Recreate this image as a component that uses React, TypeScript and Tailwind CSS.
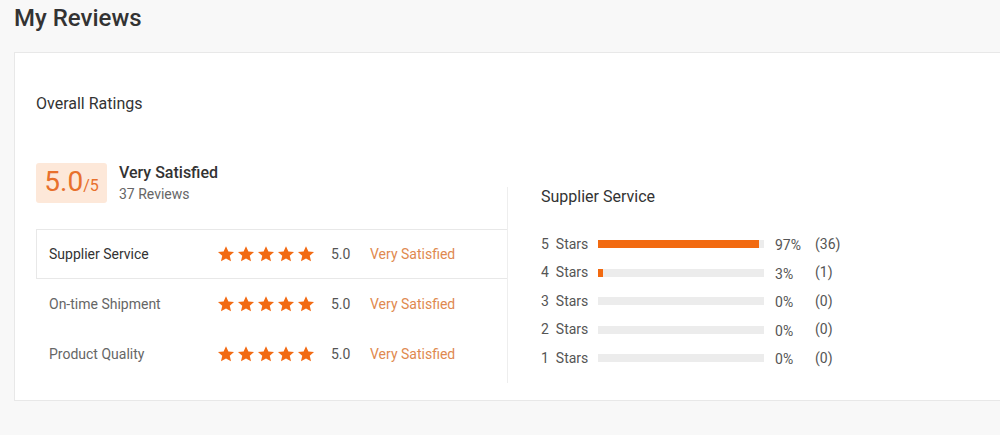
const categories = [
  { label: 'Supplier Service', score: '5.0', active: true },
  { label: 'On-time Shipment', score: '5.0', active: false },
  { label: 'Product Quality', score: '5.0', active: false },
]

const breakdown = [
  { stars: 5, pct: 97, count: 36 },
  { stars: 4, pct: 3, count: 1 },
  { stars: 3, pct: 0, count: 0 },
  { stars: 2, pct: 0, count: 0 },
  { stars: 1, pct: 0, count: 0 },
]

function Star() {
  return (
    <svg width="18" height="18" viewBox="0 0 24 24" className="shrink-0">
      <path
        d="M12 1.5l3.2 7 7.5.7-5.7 5.1 1.7 7.5L12 17.9l-6.7 3.9 1.7-7.5-5.7-5.1 7.5-.7z"
        fill="#f26a13"
      />
    </svg>
  )
}

export default function App() {
  return (
    <div className="h-[435px] w-[1000px] overflow-hidden bg-[#f8f8f8] font-['Roboto',sans-serif] text-[#333]">
      {/* Title */}
      <div className="h-[52px] pl-[14px] pt-[3px]">
        <h1 className="text-[24px] leading-[30px] font-medium text-[#333]">My Reviews</h1>
      </div>

      {/* Card */}
      <div className="ml-[14px] h-[349px] w-[1000px] border border-[#e8e8e8] bg-white pl-[21px]">
        <h2 className="pt-[41px] text-[16px] leading-[20px] text-[#333]">Overall Ratings</h2>

        <div className="mt-[49px] flex items-start">
          {/* Left column */}
          <div className="w-[471px]">
            <div className="flex items-start gap-3">
              <div className="flex h-[40px] w-[71px] items-baseline justify-center rounded-[3px] bg-[#fde8d9] pt-[3px]">
                <span className="text-[28px] leading-[32px] text-[#e8702c]">5.0</span>
                <span className="text-[16px] leading-[20px] text-[#e8702c]">/5</span>
              </div>
              <div>
                <div className="text-[16px] leading-[20px] font-medium text-[#333]">Very Satisfied</div>
                <div className="mt-[1px] text-[14px] leading-[20px] text-[#666]">37 Reviews</div>
              </div>
            </div>

            <div className="mt-[25px]">
              {categories.map(c => (
                <div
                  key={c.label}
                  className={`flex h-[50px] items-center text-[14px] ${
                    c.active
                      ? 'border-y border-l border-[#e8e8e8] pl-[12px] text-[#333]'
                      : 'pl-[13px] text-[#666]'
                  }`}
                >
                  <span className="w-[168px]">{c.label}</span>
                  <div className="flex w-[98px] items-center gap-[2px]">
                    {[0, 1, 2, 3, 4].map(i => (
                      <Star key={i} />
                    ))}
                  </div>
                  <span className="ml-[16px] w-[39px] text-[#555]">{c.score}</span>
                  <span className="text-[#e0894f]">Very Satisfied</span>
                </div>
              ))}
            </div>
          </div>

          {/* Right column */}
          <div className="mt-[24px] border-l border-[#eeeeee] pb-[10px] pl-[33px]">
            <h3 className="text-[16px] leading-[20px] text-[#333]">Supplier Service</h3>
            <div className="mt-[23px]">
              {breakdown.map(b => (
                <div key={b.stars} className="flex h-[28.5px] items-center text-[14px] text-[#555]">
                  <span className="w-[57px]">
                    {b.stars}&nbsp; Stars
                  </span>
                  <div className="h-[8px] w-[166px] bg-[#ececec]">
                    <div className="h-full bg-[#f26a10]" style={{ width: `${b.pct}%` }} />
                  </div>
                  <span className="ml-[11px] w-[40px] pt-[3px]">{b.pct}%</span>
                  <span>({b.count})</span>
                </div>
              ))}
            </div>
          </div>
        </div>
      </div>
    </div>
  )
}
